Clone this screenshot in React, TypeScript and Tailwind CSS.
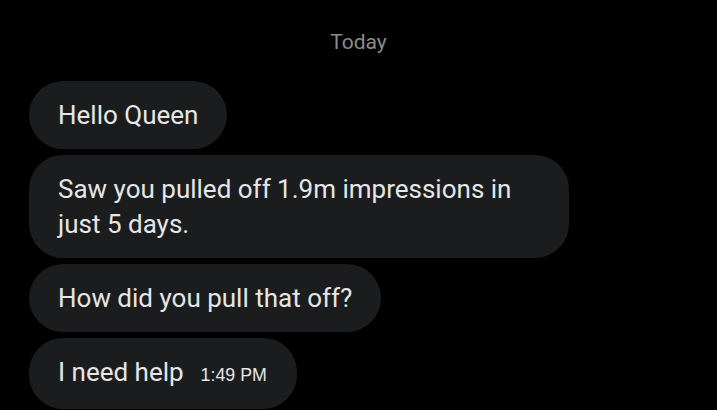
const messages = [
  "Hello Queen",
  "Saw you pulled off 1.9m impressions in just 5 days.",
  "How did you pull that off?",
];

function Bubble({ children }: { children: React.ReactNode }) {
  return (
    <div className="max-w-[540px] self-start rounded-[34px] bg-[#1b1c1e] px-[29px] pb-[16px] pt-[17px] text-[26px] leading-[35px] text-[#e6e6e6]">
      {children}
    </div>
  );
}

export default function App() {
  return (
    <div
      className="h-[410px] w-full overflow-hidden bg-black"
      style={{ fontFamily: "Roboto, 'Noto Sans', sans-serif" }}
    >
      <div className="pt-[28px] text-center text-[21px] leading-[28px] text-[#8a8a8a]">
        Today
      </div>
      <div className="flex flex-col gap-[6px] pl-[29px] pt-[25px]">
        {messages.map((m) => (
          <Bubble key={m}>{m}</Bubble>
        ))}
        <Bubble>
          <span>I need help</span>
          <span
            className="ml-[17px] pr-[1px] text-[17.8px] text-[#e6e6e6]"
            style={{ fontFamily: "'Liberation Sans', Arial, sans-serif" }}
          >
            1:49 PM
          </span>
        </Bubble>
      </div>
    </div>
  );
}
